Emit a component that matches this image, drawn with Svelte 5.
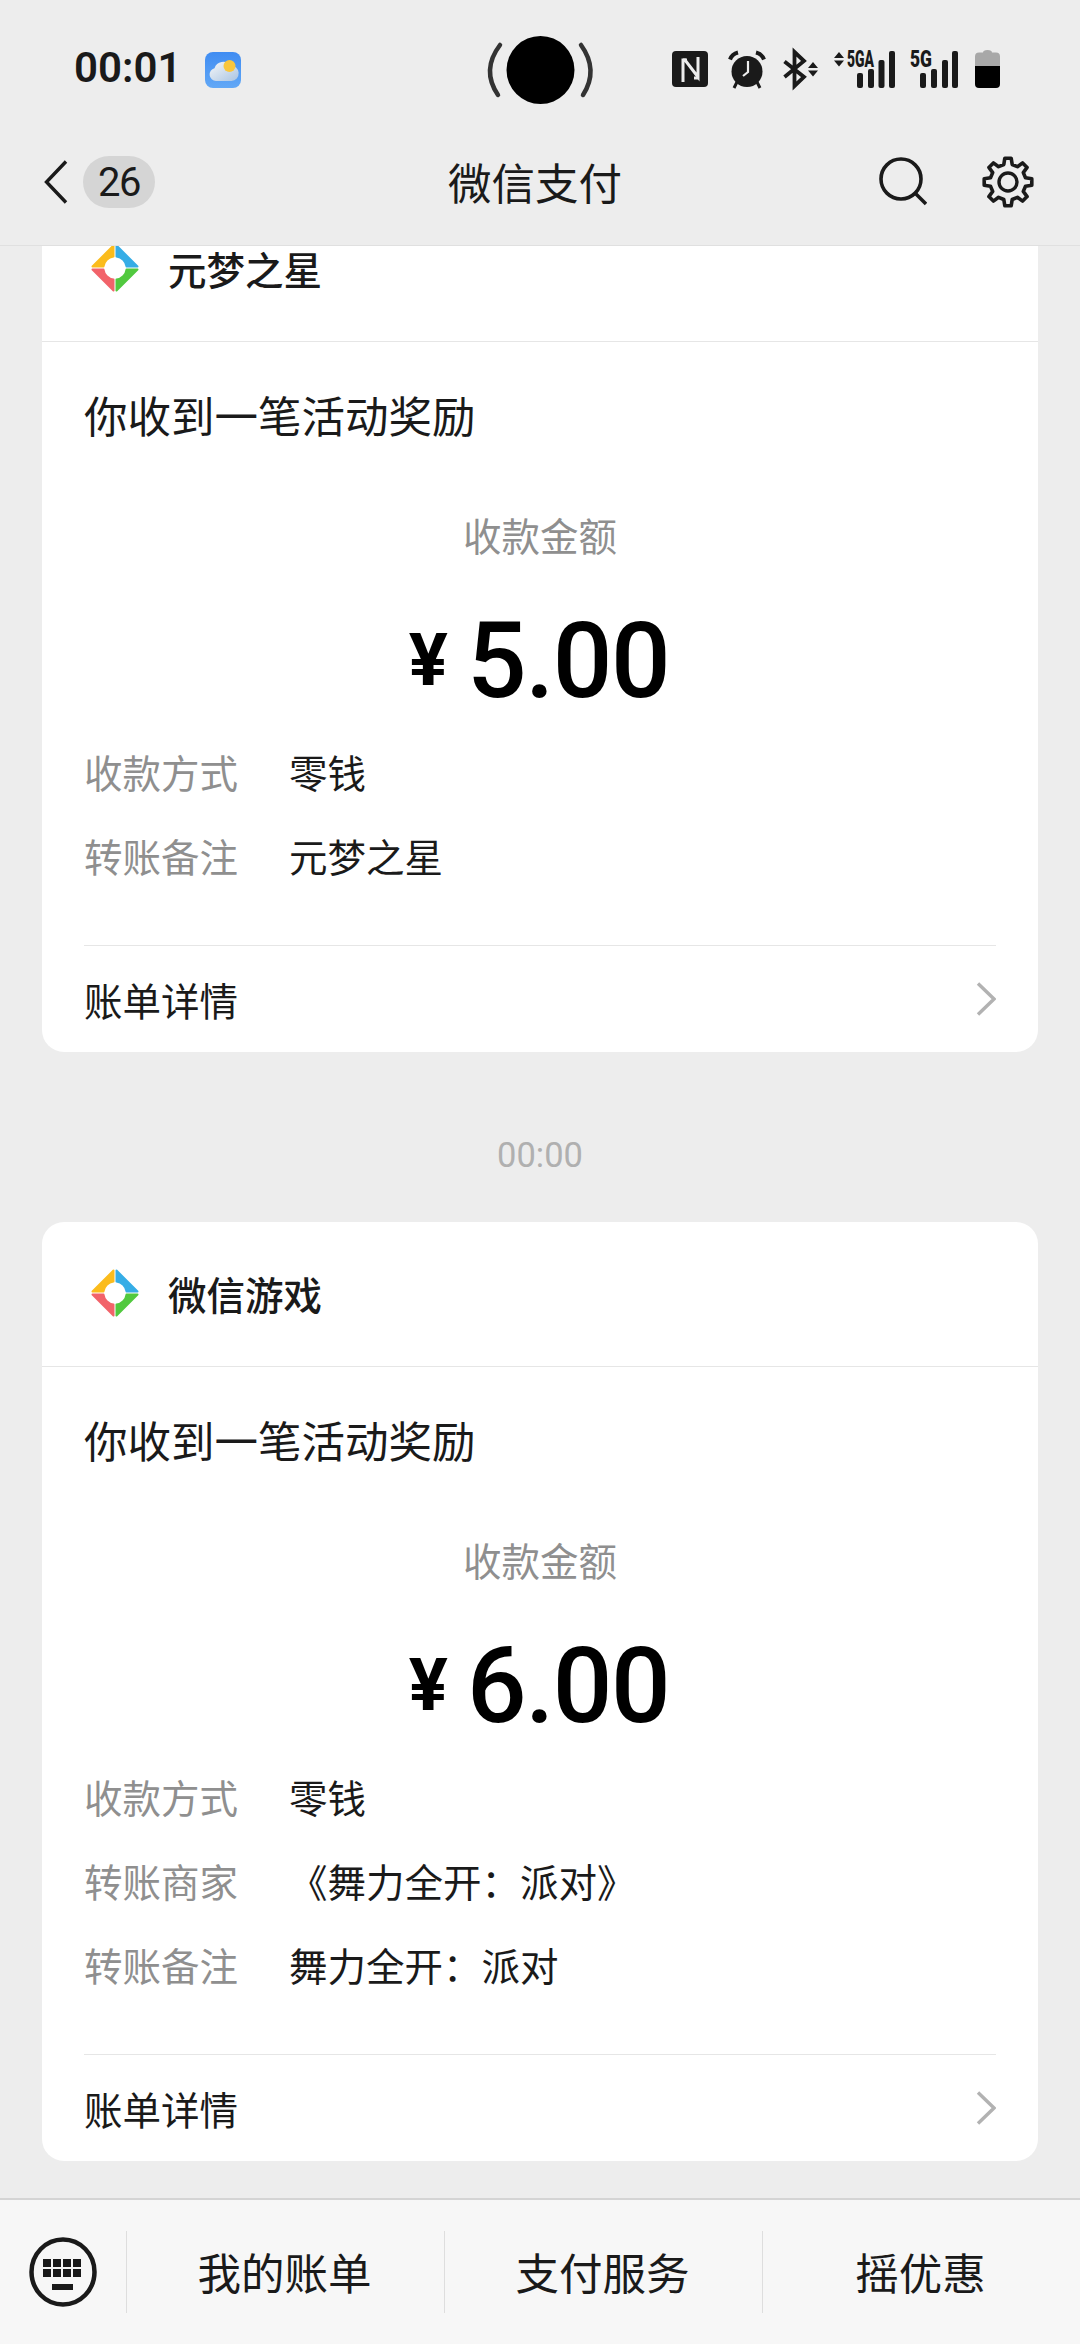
<script>
	const cards = [
		{
			title: '元梦之星',
			amount: '5.00',
			scrolled: true,
			rows: [
				['收款方式', '零钱'],
				['转账备注', '元梦之星']
			]
		},
		{
			title: '微信游戏',
			amount: '6.00',
			rows: [
				['收款方式', '零钱'],
				['转账商家', '《舞力全开：派对》'],
				['转账备注', '舞力全开：派对']
			]
		}
	];
	const tabs = ['我的账单', '支付服务', '摇优惠'];
	const keys = [0, 1, 2, 3];

	// eight-toothed outline for the settings icon
	function gear_path(cx, cy, outer, inner, teeth) {
		const step = (Math.PI * 2) / teeth;
		const pts = [];
		for (let i = 0; i < teeth; i++) {
			const a = -Math.PI / 2 + i * step;
			const spots = [
				[inner, a - step * 0.3],
				[outer, a - step * 0.17],
				[outer, a + step * 0.17],
				[inner, a + step * 0.3]
			];
			for (const [r, t] of spots) {
				pts.push(`${(cx + r * Math.cos(t)).toFixed(1)} ${(cy + r * Math.sin(t)).toFixed(1)}`);
			}
		}
		return 'M' + pts.join('L') + 'Z';
	}
	const gear = gear_path(26, 26, 24, 18, 8);
</script>

<div class="page">
	<header>
		<div class="status">
			<span class="time">00:01</span>
			<svg class="weather" viewBox="0 0 36 36" width="36" height="36">
				<defs>
					<linearGradient id="sky" x1="0" y1="0" x2="0" y2="1">
						<stop offset="0" stop-color="#3f8cf2" />
						<stop offset="1" stop-color="#62a8f6" />
					</linearGradient>
					<linearGradient id="cloud" x1="0" y1="0" x2="1" y2="1">
						<stop offset="0" stop-color="#f6f7f8" />
						<stop offset="1" stop-color="#a9c4e2" />
					</linearGradient>
				</defs>
				<rect width="36" height="36" rx="8" fill="url(#sky)" />
				<path d="M11 29a6.500 6.500 0 0 1-1.500-12.800a9 9 0 0 1 16-2.500a7.500 7.500 0 0 1 1 15.300z" fill="url(#cloud)" />
				<circle cx="24.500" cy="14" r="6" fill="#f9c63c" />
			</svg>
			<div class="camera">
				<svg viewBox="0 0 106 68" width="106" height="68">
					<path d="M13 9Q-6 34 11 59" fill="none" stroke="#333" stroke-width="4.500" stroke-linecap="round" />
					<circle cx="53.500" cy="34" r="34" fill="#000" />
					<path d="M94 9Q112 34 96 59" fill="none" stroke="#333" stroke-width="4.500" stroke-linecap="round" />
				</svg>
			</div>
			<div class="indicators">
				<svg viewBox="0 0 36 36" width="36" height="36">
					<rect width="36" height="36" rx="4" fill="#1a1a1a" />
					<path d="M11 31V9h2L26 26V6" fill="none" stroke="#ededed" stroke-width="3" />
					<path d="M11 9l4 0M26 27l-4 0" fill="none" stroke="#ededed" stroke-width="3" />
				</svg>
				<svg class="alarm" viewBox="0 0 38 38" width="38" height="38">
					<circle cx="19" cy="21.500" r="15.500" fill="#1a1a1a" />
					<path d="M2 9.500Q4 4 10 2.500M36 9.500Q34 4 28 2.500" fill="none" stroke="#1a1a1a" stroke-width="4" />
					<path d="M9 32l-3 6M29 32l3 6" stroke="#1a1a1a" stroke-width="3" />
					<path d="M20 11v11l-5 4" fill="none" stroke="#ededed" stroke-width="2.200" />
				</svg>
				<svg class="bt" viewBox="0 0 36 38" width="36" height="38">
					<path d="M1.500 11.500L21 27l-9.500 9V2l9.500 9L1.500 27" fill="none" stroke="#1a1a1a" stroke-width="3.800" />
					<path d="M25 18l5-6 5 6zM25 20.500l5 6 5-6z" fill="#1a1a1a" />
				</svg>
				<svg class="sig-a" viewBox="0 0 62 38" width="62" height="38">
					<path d="M0 8l5-6 5 6zM0 10.500l5 6 5-6z" fill="#1a1a1a" />
					<text x="13" y="17" textLength="27" lengthAdjust="spacingAndGlyphs">5GA</text>
					<rect x="23" y="23" width="6" height="15" rx="2" />
					<rect x="34" y="19" width="6" height="19" rx="2" />
					<rect x="44.500" y="10" width="6" height="28" rx="2" />
					<rect x="55" y="1" width="6" height="37" rx="2" />
				</svg>
				<svg class="sig" viewBox="0 0 48 38" width="48" height="38">
					<text x="0" y="17" textLength="22" lengthAdjust="spacingAndGlyphs">5G</text>
					<rect x="10" y="23" width="6" height="15" rx="2" />
					<rect x="21" y="19" width="6" height="19" rx="2" />
					<rect x="32" y="10" width="6" height="28" rx="2" />
					<rect x="42" y="1" width="6" height="37" rx="2" />
				</svg>
				<svg class="battery" viewBox="0 0 25 38" width="25" height="38">
					<path d="M8 2.500Q8 0 12.500 0T17 2.500h4a4 4 0 0 1 4 4V16H0V6.500a4 4 0 0 1 4-4z" fill="#a8a8a8" />
					<path d="M0 16h25v18a4 4 0 0 1-4 4H4a4 4 0 0 1-4-4z" fill="#000" />
				</svg>
			</div>
		</div>
		<nav>
			<svg class="back" viewBox="0 0 24 44" width="24" height="44">
				<path d="M22 1.500L2.500 22 22 42.500" fill="none" stroke="#1a1a1a" stroke-width="3.400" />
			</svg>
			<span class="badge">26</span>
			<h1>微信支付</h1>
			<svg class="search" viewBox="0 0 48 50" width="48" height="50">
				<circle cx="22" cy="22" r="20" fill="none" stroke="#1a1a1a" stroke-width="3.600" />
				<path d="M36 36l11 11" stroke="#1a1a1a" stroke-width="3.600" />
			</svg>
			<svg class="gear" viewBox="0 0 52 52" width="52" height="52">
				<path d={gear} fill="none" stroke="#1a1a1a" stroke-width="3.600" stroke-linejoin="round" />
				<circle cx="26" cy="26" r="9" fill="none" stroke="#1a1a1a" stroke-width="3.400" />
			</svg>
		</nav>
	</header>

	<main>
		{#each cards as card, i}
			{#if i > 0}
				<div class="stamp">00:00</div>
			{/if}
			<section class="card" class:scrolled={card.scrolled}>
				<div class="card-head">
					<svg viewBox="0 0 48 48" width="48" height="48">
						<path d="M22.500 1.500v11a11.500 11.500 0 0 0-10 10h-11z" fill="#fbbc1d" stroke="#fbbc1d" stroke-width="2" stroke-linejoin="round" />
						<path d="M25.500 1.500v11a11.500 11.500 0 0 1 10 10h11z" fill="#36ade6" stroke="#36ade6" stroke-width="2" stroke-linejoin="round" />
						<path d="M22.500 46.500v-11a11.500 11.500 0 0 1-10-10h-11z" fill="#f2636a" stroke="#f2636a" stroke-width="2" stroke-linejoin="round" />
						<path d="M25.500 46.500v-11a11.500 11.500 0 0 0 10-10h11z" fill="#52c93f" stroke="#52c93f" stroke-width="2" stroke-linejoin="round" />
					</svg>
					<span>{card.title}</span>
				</div>
				<div class="card-body">
					<h2>你收到一笔活动奖励</h2>
					<p class="amount-label">收款金额</p>
					<div class="amount">
						<span class="yen">¥</span>
						<span class="num">{card.amount}</span>
					</div>
					<dl>
						{#each card.rows as [label, value]}
							<div class="row">
								<dt>{label}</dt>
								<dd>{value}</dd>
							</div>
						{/each}
					</dl>
				</div>
				<div class="detail">
					<span>账单详情</span>
					<svg viewBox="0 0 20 34" width="20" height="34">
						<path d="M2 1.500L18 17 2 32.500" fill="none" stroke="#b2b2b2" stroke-width="3.400" />
					</svg>
				</div>
			</section>
		{/each}
	</main>

	<footer>
		<div class="kbd">
			<svg viewBox="0 0 68 70" width="68" height="70">
				<ellipse cx="34" cy="35" rx="31.500" ry="32.500" fill="none" stroke="#1a1a1a" stroke-width="4.500" />
				{#each [22, 32] as y}
					{#each keys as k}
						<rect x={14 + k * 10} {y} width="8" height="8" fill="#1a1a1a" />
					{/each}
				{/each}
				<rect x="23" y="47" width="21" height="6" fill="#1a1a1a" />
			</svg>
		</div>
		{#each tabs as tab}
			<div class="tab">{tab}</div>
		{/each}
	</footer>
</div>

<style>
	:global(body) {
		margin: 0;
		background: #ededed;
	}

	.page {
		width: 1080px;
		height: 2344px;
		display: flex;
		flex-direction: column;
		overflow: hidden;
		background: #ededed;
		color: #1a1a1a;
		font-family: 'Noto Sans CJK SC', Roboto, sans-serif;
	}

	header {
		position: relative;
		z-index: 1;
		height: 246px;
		flex: none;
		box-sizing: border-box;
		background: #ededed;
		border-bottom: 1px solid #e0e0e0;
	}

	.status {
		position: relative;
		height: 130px;
		display: flex;
		align-items: center;
		padding: 0 80px 0 74px;
		box-sizing: border-box;
	}

	.time {
		font: 600 42px/1 Roboto, sans-serif;
		padding-top: 6px;
		margin-right: 24px;
	}

	.weather {
		margin-top: 10px;
	}

	.camera {
		position: absolute;
		left: 487px;
		top: 36px;
		height: 68px;
	}

	.camera svg {
		overflow: visible;
	}

	.indicators {
		margin-left: auto;
		display: flex;
		align-items: center;
		padding-top: 8px;
	}

	.indicators svg {
		overflow: visible;
	}

	.indicators text {
		font: 900 23px Roboto, sans-serif;
		fill: #1a1a1a;
	}

	.indicators rect {
		fill: #1a1a1a;
	}

	.alarm {
		margin-left: 20px;
	}

	.bt {
		margin-left: 17px;
	}

	.sig-a {
		margin-left: 15px;
	}

	.sig {
		margin-left: 14px;
	}

	.battery {
		margin-left: 17px;
	}

	nav {
		position: relative;
		height: 116px;
		display: flex;
		align-items: center;
		padding: 0 46px 12px 44px;
		box-sizing: border-box;
	}

	.badge {
		margin-left: 15px;
		width: 72px;
		height: 52px;
		border-radius: 26px;
		background: #d5d5d5;
		text-align: center;
		font: 400 40px/54px Roboto, sans-serif;
		letter-spacing: -1.500px;
	}

	h1 {
		position: absolute;
		left: 0;
		right: 10px;
		top: 0;
		margin: 0;
		text-align: center;
		font-size: 43.500px;
		font-weight: 400;
		line-height: 104px;
	}

	.search {
		margin-left: auto;
		margin-right: 55px;
	}

	main {
		flex: 1;
		min-height: 0;
		padding: 0 42px;
	}

	.stamp {
		height: 170px;
		box-sizing: border-box;
		padding-top: 81px;
		text-align: center;
		color: #b0b0b0;
		font: 400 34.500px/44px Roboto, sans-serif;
	}

	.card {
		background: #fff;
		border-radius: 22px;
		overflow: hidden;
	}

	.card.scrolled {
		margin-top: -49px;
	}

	.card-head {
		height: 145px;
		box-sizing: border-box;
		border-bottom: 1px solid #e6e6e6;
		display: flex;
		align-items: center;
		padding-left: 49px;
		padding-bottom: 2px;
		font-size: 38.500px;
		font-weight: 500;
		line-height: 44px;
		gap: 29px;
	}

	.card-body {
		padding: 0 42px;
	}

	h2 {
		margin: 0;
		font-size: 43.500px;
		font-weight: 400;
		line-height: 60px;
		padding-top: 43px;
	}

	.amount-label {
		margin: 0;
		padding-top: 61px;
		text-align: center;
		color: #8f8f8f;
		font-size: 38.500px;
		line-height: 56px;
	}

	.amount {
		height: 167px;
		display: flex;
		justify-content: center;
		align-items: flex-start;
		color: #000;
		padding-right: 2px;
	}

	.yen {
		font: 700 73px/1 Roboto, sans-serif;
		margin-top: 62px;
		margin-right: 19px;
	}

	.num {
		font: 500 105px/1 Roboto, sans-serif;
		letter-spacing: -1.500px;
		margin-top: 47px;
	}

	dl {
		margin: 0;
		padding-bottom: 48px;
	}

	.row {
		display: flex;
		height: 84px;
		align-items: center;
		font-size: 38.500px;
	}

	dt {
		width: 205px;
		color: #8f8f8f;
	}

	dd {
		margin: 0;
	}

	.detail {
		margin: 0 42px;
		height: 107px;
		box-sizing: border-box;
		border-top: 1px solid #e6e6e6;
		display: flex;
		align-items: center;
		justify-content: space-between;
		font-size: 38.500px;
	}

	footer {
		height: 146px;
		flex: none;
		box-sizing: border-box;
		border-top: 2px solid #d4d4d4;
		background: #f7f7f7;
		display: flex;
		align-items: center;
	}

	.kbd {
		width: 126px;
		flex: none;
		display: flex;
		justify-content: center;
		box-sizing: border-box;
	}

	.tab {
		flex: 1;
		height: 82px;
		line-height: 82px;
		text-align: center;
		font-size: 43.500px;
		border-left: 1px solid #dedede;
		padding-right: 2px;
	}
</style>
